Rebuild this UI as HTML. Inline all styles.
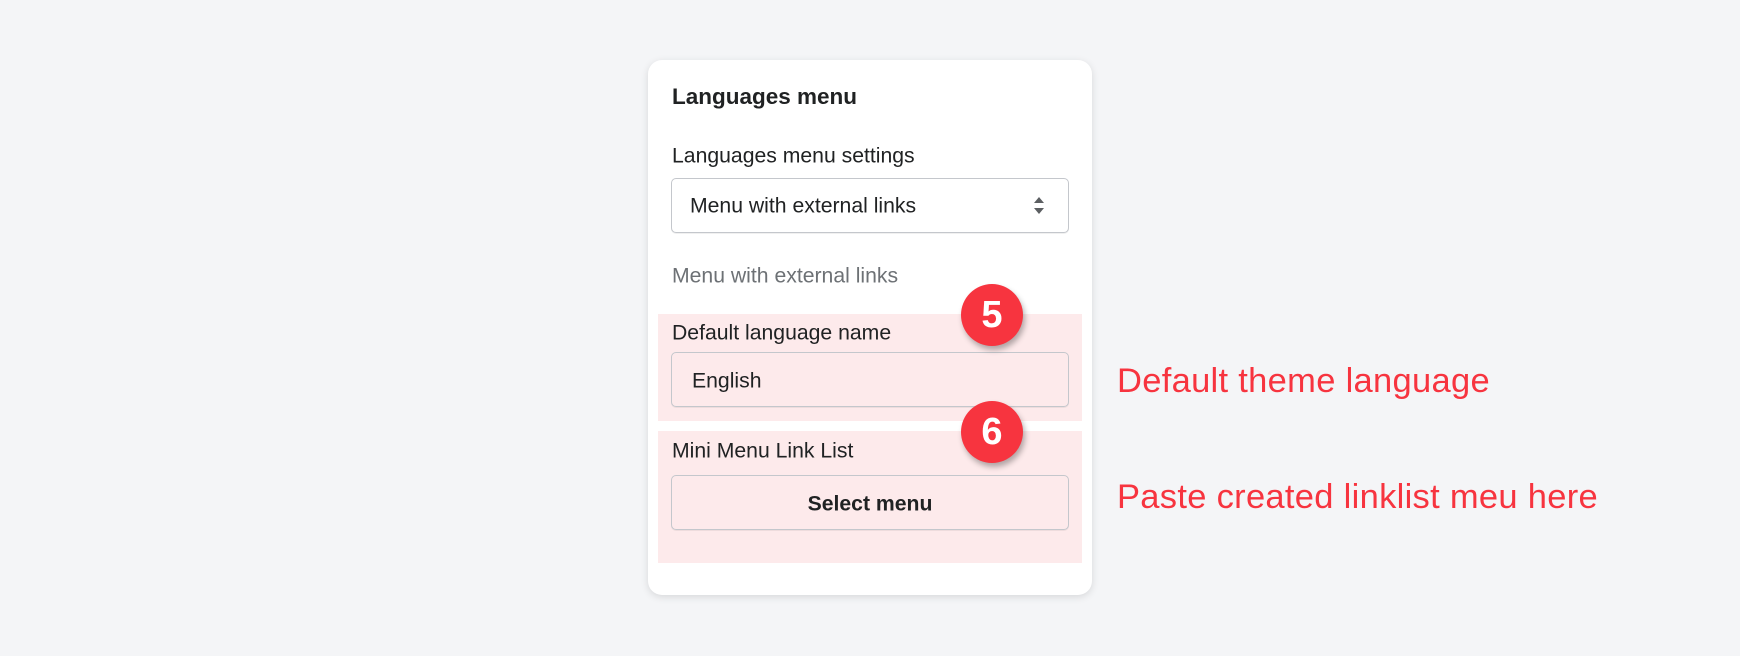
<!DOCTYPE html>
<html><head><meta charset="utf-8"><style>
body{margin:0;width:1740px;height:656px;background:#f4f5f7;font-family:"Liberation Sans",sans-serif;position:relative;overflow:hidden}
.card{position:absolute;left:648px;top:60px;width:444px;height:535px;background:#fff;border-radius:14px;box-shadow:0 2px 8px rgba(0,0,0,.12)}
.a{position:absolute;white-space:nowrap;line-height:1}
.c{transform:translateY(-50%)}
.pink{position:absolute;background:#fdeaeb}
.box{position:absolute;left:671px;width:398px;height:55px;border:1px solid #c4c7cc;border-radius:5px;box-sizing:border-box;box-shadow:0 1px 0 rgba(0,0,0,.06)}
.circ{position:absolute;width:62px;height:62px;border-radius:50%;background:#f7343f;color:#fff;font-weight:bold;font-size:38px;text-align:center;line-height:62px;box-shadow:2px 4px 6px rgba(0,0,0,.3)}
.red{color:#f7343f;font-size:34.5px;letter-spacing:0.3px}
.l{font-size:21.2px;color:#202223}
</style></head><body>
<div class="card"></div>
<div class="a c" style="left:672px;top:97px;font-size:22.5px;font-weight:bold;color:#202223">Languages menu</div>
<div class="a c l" style="left:672px;top:156px">Languages menu settings</div>
<div class="box" style="top:178px;background:#fff"></div>
<div class="a c l" style="left:690px;top:206px">Menu with external links</div>
<svg class="a" style="left:1032px;top:195px" width="14" height="22"><path d="M7 2 L12 8 H2Z M7 19 L12 13 H2Z" fill="#5c5f62"/></svg>
<div class="a c l" style="left:672px;top:276px;color:#6d7175">Menu with external links</div>
<div class="pink" style="left:658px;top:314px;width:424px;height:107px"></div>
<div class="pink" style="left:658px;top:431px;width:424px;height:132px"></div>
<div class="a c l" style="left:672px;top:333px">Default language name</div>
<div class="box" style="top:352px"></div>
<div class="a c l" style="left:692px;top:381px">English</div>
<div class="a c l" style="left:672px;top:451px">Mini Menu Link List</div>
<div class="box" style="top:475px"></div>
<div class="a c l" style="left:671px;width:398px;text-align:center;top:504px;font-weight:bold">Select menu</div>
<div class="circ" style="left:961px;top:284px">5</div>
<div class="circ" style="left:961px;top:401px">6</div>
<div class="a c red" style="left:1117px;top:381px">Default theme language</div>
<div class="a c red" style="left:1117px;top:497px">Paste created linklist meu here</div>
</body></html>
